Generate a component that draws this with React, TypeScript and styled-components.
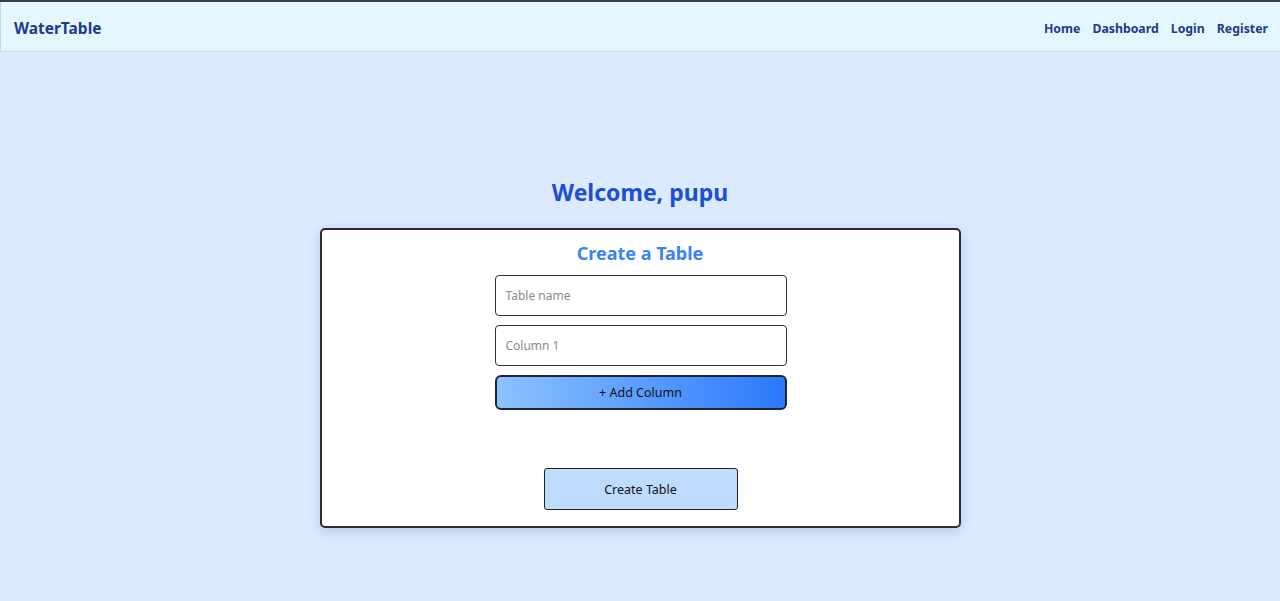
import styled, { createGlobalStyle } from 'styled-components';

const GlobalStyle = createGlobalStyle`
  * {
    box-sizing: border-box;
  }

  body {
    margin: 0;
    background-color: #dbeafe;
    font-family: "Noto Sans", "Open Sans", sans-serif;
  }
`;

const Page = styled.div`
  min-height: 601px;
  border-top: 2px solid #3a3f4b;
`;

const NavbarContainer = styled.nav`
  display: flex;
  align-items: center;
  justify-content: space-between;
  height: 50px;
  padding: 3px 12px 0 13px;
  background-color: #e4f7ff;
  border-left: 1px solid #c4d6ea;
  border-bottom: 1px solid #c9dbef;
`;

const Brand = styled.div`
  font-size: 15.5px;
  font-weight: 700;
  color: #1e3a8a;
`;

const NavLinks = styled.div`
  display: flex;
  align-items: center;
  gap: 12px;
`;

const NavLink = styled.a`
  font-size: 12.3px;
  font-weight: 700;
  color: #1e3a8a;
  text-decoration: none;
`;

const Main = styled.main`
  display: flex;
  flex-direction: column;
  align-items: center;
  padding-top: 124px;
`;

const Welcome = styled.h1`
  margin: 0 0 20px;
  font-size: 23px;
  font-weight: 700;
  color: #1d4ed8;
`;

const Card = styled.section`
  display: flex;
  flex-direction: column;
  align-items: center;
  width: 641px;
  padding: 11px 0 16px;
  background-color: #fff;
  border: 2px solid #2a2d33;
  border-radius: 5px;
  box-shadow: 0 4px 12px rgba(30, 60, 110, 0.18);
`;

const CardTitle = styled.h2`
  margin: 0 0 10px;
  font-size: 18px;
  font-weight: 700;
  color: #3b82f6;
`;

const Form = styled.div`
  display: flex;
  flex-direction: column;
  gap: 9px;
  width: 292px;
  margin-left: 1px;
`;

const Input = styled.input`
  height: 41px;
  padding: 0 10px;
  font-family: inherit;
  font-size: 12px;
  border: 1px solid #333;
  border-radius: 4px;
  background: #fff;

  &::placeholder {
    color: #8a8a8a;
  }
`;

const AddButton = styled.button`
  height: 35px;
  font-family: inherit;
  font-size: 12.5px;
  color: #111;
  background: linear-gradient(90deg, #8cc2ff 0%, #2b78fb 100%);
  border: 2px solid #1f2633;
  border-radius: 6px;
  cursor: pointer;
`;

const CreateButton = styled.button`
  width: 194px;
  height: 42px;
  margin-top: 58px;
  margin-left: 1px;
  font-family: inherit;
  font-size: 12.5px;
  color: #111;
  background-color: #bfdbfe;
  border: 1px solid #222;
  border-radius: 3px;
  cursor: pointer;
`;

const App = () => {
  return (
    <Page>
      <GlobalStyle />
      <NavbarContainer>
        <Brand>WaterTable</Brand>
        <NavLinks>
          <NavLink href="#">Home</NavLink>
          <NavLink href="#">Dashboard</NavLink>
          <NavLink href="#">Login</NavLink>
          <NavLink href="#">Register</NavLink>
        </NavLinks>
      </NavbarContainer>
      <Main>
        <Welcome>Welcome, pupu</Welcome>
        <Card>
          <CardTitle>Create a Table</CardTitle>
          <Form>
            <Input placeholder="Table name" />
            <Input placeholder="Column 1" />
            <AddButton>+ Add Column</AddButton>
          </Form>
          <CreateButton>Create Table</CreateButton>
        </Card>
      </Main>
    </Page>
  );
};

export default App;
